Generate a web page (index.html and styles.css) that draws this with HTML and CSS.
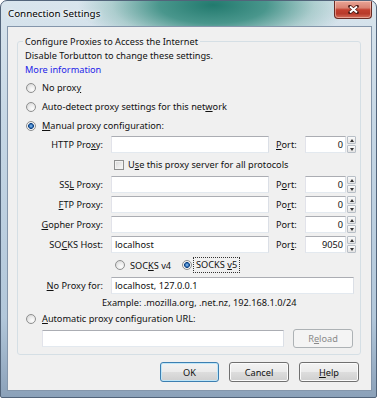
FILE: index.html
```html
<!DOCTYPE html>
<html lang="en">
<head>
  <meta charset="UTF-8" />
  <title>Connection Settings</title>
  <link rel="stylesheet" href="styles.css">
</head>
<body>
  <div class="window">
    <div class="titlebar">
      <span class="title">Connection Settings</span>
      <span class="close">
        <svg width="11" height="9" viewBox="0 0 11 9">
          <path d="M2 1.5 L9 7.5 M9 1.5 L2 7.5" stroke="#4a1a14" stroke-width="3.6" stroke-linecap="round"/>
          <path d="M2 1.5 L9 7.5 M9 1.5 L2 7.5" stroke="#fff" stroke-width="2"/>
        </svg>
      </span>
    </div>

    <div class="client">
      <fieldset class="group">
        <legend>Configure Proxies to Access the Internet</legend>
        <div class="line">Disable Torbutton to change these settings.</div>
        <div class="line link">More information</div>

        <div class="option first"><span class="radio"></span><span>No prox<u>y</u></span></div>
        <div class="option"><span class="radio"></span><span>Auto-detect proxy settings for this net<u>w</u>ork</span></div>
        <div class="option"><span class="radio on"></span><span><u>M</u>anual proxy configuration:</span></div>

        <div class="proxy-grid">
          <span class="lbl">HTTP Pro<u>x</u>y:</span>
          <span class="field"></span>
          <span class="port-lbl"><u>P</u>ort:</span>
          <span class="spin"><span class="spin-field">0</span><span class="spin-btns"><span class="up"></span><span class="down"></span></span></span>

          <span class="check-row"><span class="check"></span><span>U<u>s</u>e this proxy server for all protocols</span></span>

          <span class="lbl">SS<u>L</u> Proxy:</span>
          <span class="field"></span>
          <span class="port-lbl">P<u>o</u>rt:</span>
          <span class="spin"><span class="spin-field">0</span><span class="spin-btns"><span class="up"></span><span class="down"></span></span></span>

          <span class="lbl"><u>F</u>TP Proxy:</span>
          <span class="field"></span>
          <span class="port-lbl">Po<u>r</u>t:</span>
          <span class="spin"><span class="spin-field">0</span><span class="spin-btns"><span class="up"></span><span class="down"></span></span></span>

          <span class="lbl"><u>G</u>opher Proxy:</span>
          <span class="field"></span>
          <span class="port-lbl">Port:</span>
          <span class="spin"><span class="spin-field">0</span><span class="spin-btns"><span class="up"></span><span class="down"></span></span></span>

          <span class="lbl">SO<u>C</u>KS Host:</span>
          <span class="field">localhost</span>
          <span class="port-lbl">Por<u>t</u>:</span>
          <span class="spin"><span class="spin-field">9050</span><span class="spin-btns"><span class="up"></span><span class="down"></span></span></span>

          <span class="socks-row">
            <span class="socks-opt"><span class="radio"></span><span>SOC<u>K</u>S v4</span></span>
            <span class="socks-opt"><span class="radio on"></span><span class="focus">SOCKS <u>v</u>5</span></span>
          </span>

          <span class="lbl"><u>N</u>o Proxy for:</span>
          <span class="field wide">localhost, 127.0.0.1</span>

          <span class="example">Example: .mozilla.org, .net.nz, 192.168.1.0/24</span>
        </div>

        <div class="option auto"><span class="radio"></span><span><u>A</u>utomatic proxy configuration URL:</span></div>
        <div class="url-row">
          <span class="field url"></span>
          <span class="btn disabled"><span>R<u>e</u>load</span></span>
        </div>
      </fieldset>

      <div class="buttons">
        <span class="btn default">OK</span>
        <span class="btn">Cancel</span>
        <span class="btn"><span><u>H</u>elp</span></span>
      </div>
    </div>
  </div>
</body>
</html>
```

FILE: styles.css
```css
body {
  margin: 0;
  background: #fff;
  font-family: "Noto Sans", "Liberation Sans", sans-serif;
  font-size: 9.2px;
  color: #111;
}
u {
  text-underline-offset: 1px;
}

/* window frame */
.window {
  width: 377px;
  height: 398px;
  box-sizing: border-box;
  border: 1px solid #52647a;
  border-radius: 7px 7px 2px 2px;
  padding: 0 4px 6px 6px;
  display: flex;
  flex-direction: column;
  overflow: hidden;
  background:
    radial-gradient(ellipse 135px 46px at 212px 4px, rgba(34,122,110,1) 0%, rgba(58,142,130,0.9) 40%, rgba(110,172,162,0.4) 75%, rgba(120,180,170,0) 100%),
    linear-gradient(#d9e5ed 0%, #c6d7e5 30%, #b2c7da 80%, #8ba1b9 100%);
}
.titlebar {
  height: 25px;
  display: flex;
  align-items: flex-start;
}
.title {
  padding: 6px 0 0 1px;
  font-size: 9.8px;
  line-height: 14px;
  color: #000;
  text-shadow: 0 0 4px #fff, 0 0 2px #fff;
}
.close {
  margin-left: auto;
  width: 38px;
  height: 18px;
  box-sizing: border-box;
  border: 1px solid #6a2b24;
  border-top: none;
  border-radius: 0 0 4px 4px;
  display: flex;
  align-items: center;
  justify-content: center;
  background: linear-gradient(#e9a596 0%, #d98373 40%, #c2402f 52%, #b83a2a 75%, #d4705d 100%);
  box-shadow: inset 0 0 0 1px rgba(255,220,210,0.5);
}

/* client area */
.client {
  flex: 1;
  background: #f0f0f0;
  border: 1px solid #8496ab;
  display: flex;
  flex-direction: column;
  padding: 7px 10px 8px 9px;
}
.group {
  margin: 0;
  min-width: 0;
  border: 1px solid #d5dfe5;
  border-radius: 3px;
  padding: 0 3px 6px 7px;
}
.group legend {
  padding: 0 2px;
  margin-left: -2px;
  line-height: 15px;
}
.line {
  line-height: 14px;
}
.link {
  color: #2323e8;
}

.option {
  height: 19px;
  display: flex;
  align-items: center;
  gap: 6px;
  padding-left: 1px;
}
.option.first {
  margin-top: 1px;
}
.option.auto {
  height: 17px;
}

.radio {
  width: 10px;
  height: 10px;
  box-sizing: border-box;
  border-radius: 50%;
  border: 1px solid #8e8f8f;
  background: radial-gradient(circle at 65% 70%, #fdfdfd 0%, #ececec 45%, #cfcfcf 100%);
  flex: none;
}
.radio.on {
  background: radial-gradient(circle at 50% 50%, #9fcdf2 0, #3b7cc4 1.4px, #10417f 2.6px, #f6f6f6 3.2px, #e6e6e6 100%);
}
.check {
  width: 10px;
  height: 10px;
  box-sizing: border-box;
  border: 1px solid #8e8f8f;
  background: linear-gradient(135deg, #d6d6d6, #fbfbfb);
  box-shadow: inset 0 0 0 1px #f2f2f2;
  flex: none;
}

/* proxy rows */
.proxy-grid {
  margin: 1px 0 0 15px;
  display: grid;
  grid-template-columns: 64px 158px 22px 51px;
  grid-template-rows: repeat(6, 17px) 18px 17px 13px;
  column-gap: 7px;
  row-gap: 3px;
  align-items: center;
}
.lbl {
  text-align: right;
  white-space: nowrap;
  padding-right: 1px;
}
.port-lbl {
  white-space: nowrap;
}
.field {
  height: 17px;
  box-sizing: border-box;
  background: #fff;
  border: 1px solid;
  border-color: #abadb3 #dbdfe6 #e3e9ef #e2e3ea;
  padding: 0 3px;
  line-height: 15px;
  white-space: nowrap;
}
.field.wide {
  grid-column: 2 / -1;
  margin-right: 2px;
}
.spin {
  height: 17px;
  display: flex;
  gap: 1px;
}
.spin-field {
  flex: 1;
  box-sizing: border-box;
  background: #fff;
  border: 1px solid;
  border-color: #abadb3 #dbdfe6 #e3e9ef #e2e3ea;
  text-align: right;
  padding-right: 2px;
  line-height: 15px;
}
.spin-btns {
  width: 9px;
  display: flex;
  flex-direction: column;
  gap: 1px;
}
.spin-btns span {
  flex: 1;
  box-sizing: border-box;
  border: 1px solid #b8bfc7;
  border-radius: 1px;
  background: linear-gradient(#fbfbfb, #e4e4e4);
  position: relative;
}
.spin-btns span::after {
  content: "";
  position: absolute;
  left: 1.5px;
  top: 2px;
  border-left: 2.5px solid transparent;
  border-right: 2.5px solid transparent;
}
.spin-btns .up::after {
  border-bottom: 3px solid #333;
}
.spin-btns .down::after {
  border-top: 3px solid #333;
}
.check-row {
  grid-column: 2 / -1;
  display: flex;
  align-items: center;
  gap: 4px;
  padding-left: 3px;
}
.socks-row {
  grid-column: 2 / -1;
  display: flex;
  align-items: center;
  padding-left: 4px;
}
.socks-opt {
  display: flex;
  align-items: center;
  gap: 5px;
  margin-right: 11px;
}
.focus {
  border: 1px dotted #333;
  padding: 0 2px;
  line-height: 14px;
  margin-left: -4px;
}
.example {
  grid-column: 1 / -1;
  padding-left: 62px;
  margin-top: -3px;
  line-height: 13px;
}

/* url row */
.url-row {
  margin: 2px 0 0 17px;
  height: 19px;
  display: flex;
  align-items: center;
  gap: 9px;
}
.field.url {
  width: 242px;
}

/* buttons */
.btn {
  height: 19px;
  box-sizing: border-box;
  border: 1px solid #707070;
  border-radius: 3px;
  background: linear-gradient(#f3f3f3 0%, #ebebeb 48%, #dddddd 52%, #cfcfcf 100%);
  box-shadow: inset 0 0 0 1px #fbfbfb;
  display: flex;
  align-items: center;
  justify-content: center;
  width: 60px;
}
.btn.disabled {
  border-color: #adb2b5;
  background: #f4f4f4;
  box-shadow: none;
  color: #8a8a8a;
}
.btn.default {
  border-color: #3c7fb1;
  box-shadow: inset 0 0 0 1px #bfe6f8;
  width: 59px;
}
.buttons {
  margin-top: auto;
  margin-right: 2px;
  display: flex;
  justify-content: flex-end;
  gap: 10px;
}
.buttons .btn {
  height: 20px;
}
```
